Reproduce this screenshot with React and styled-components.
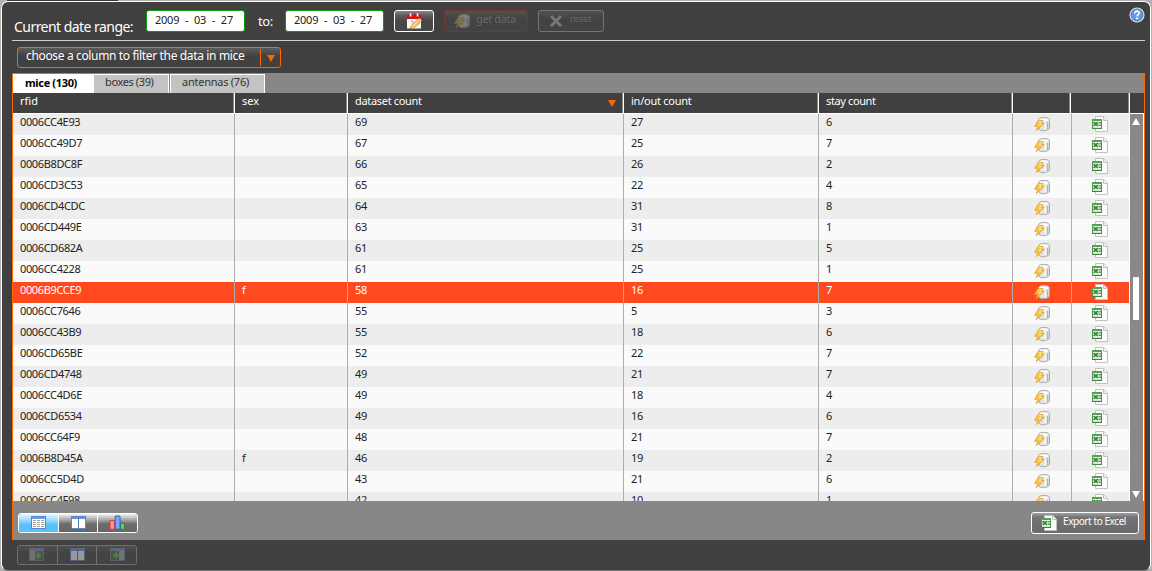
import React from "react";
import styled, { createGlobalStyle, css } from "styled-components";

const Global = createGlobalStyle`
  * { box-sizing: border-box; }
  html, body { margin: 0; height: 571px; overflow: hidden; background: #b2b2b2; }
  body { font-family: "Noto Sans", "Open Sans", sans-serif; font-size: 11px; color: #222; }
  svg { display: block; flex: none; }
`;

const Page = styled.div`
  height: 571px;
  padding: 1px 1px 0;
  background: linear-gradient(90deg, #b2b2b2 7px, #3a3a3a 7px 118px, #b2b2b2 118px) 0 0 / 100% 1px no-repeat #b2b2b2;
`;
const Frame = styled.div`
  height: 570px;
  border: 1px solid #fff;
  border-bottom-color: #777;
  border-radius: 7px;
  background: #404040;
  padding: 0 5px 0 10px;
`;
const TopBar = styled.header`
  display: flex;
  align-items: flex-start;
  height: 39px;
  border-bottom: 1px solid #cfcfcf;
`;
const RangeLabel = styled.span`
  width: 134px;
  padding: 15px 0 0 2px;
  font-size: 14px;
  line-height: 20px;
  letter-spacing: -0.54px;
  color: #fff;
  white-space: nowrap;
`;
const DateField = styled.div`
  display: flex;
  justify-content: space-between;
  width: 99px;
  height: 22px;
  margin-top: 8px;
  padding: 0 11px 0 8px;
  border: 1px solid #0a9a0a;
  border-radius: 3px;
  background: #fff;
  font-size: 11px;
  line-height: 18px;
  letter-spacing: -0.25px;
`;
const ToLabel = styled.span`
  width: 40px;
  padding: 10px 0 0 13px;
  color: #fff;
  font-size: 13px;
  line-height: 18px;
  letter-spacing: -0.4px;
`;
const Button = styled.button`
  display: flex;
  align-items: center;
  width: ${(p) => p.$w}px;
  height: 22px;
  margin: ${(p) => p.$m || "0"};
  padding: 0 0 0 ${(p) => p.$pad}px;
  gap: ${(p) => p.$gap || 0}px;
  border: 1px solid ${(p) => p.$line || "#fff"};
  border-radius: 3px;
  background: ${(p) => (p.$dim ? "linear-gradient(#505050, #434343 40%)" : p.$bg || "linear-gradient(#858585, #5a5a5a 25%, #484848 50%)")};
  color: ${(p) => (p.$dim ? "#686868" : "#fff")};
  font: inherit;
  font-size: ${(p) => p.$size || 11}px;
  letter-spacing: ${(p) => p.$ls || 0}px;
  white-space: nowrap;
`;
const ButtonText = styled.span`
  line-height: 16px;
  margin-top: -4px;
`;
const Help = styled.div`
  margin: 5px 0 0 auto;
`;
const FilterRow = styled.div`
  height: 32px;
  padding: 6px 0 0 5px;
`;
const Select = styled.div`
  display: flex;
  width: 264px;
  height: 21px;
  border: 1px solid #f60;
  border-radius: 3px;
  background: linear-gradient(#5c5c5c, #414141 45%);
  color: #fff;
  font-size: 12px;
  line-height: 16px;
  letter-spacing: -0.35px;
`;
const SelectText = styled.span`
  flex: 1;
  padding-left: 8px;
  white-space: nowrap;
`;
const SelectArrow = styled.span`
  display: flex;
  align-items: center;
  justify-content: center;
  width: 20px;
  height: 17px;
  margin-top: 1px;
  padding-top: 1px;
  border-left: 1px solid #f60;
`;
const Panel = styled.main`
  width: 1133px;
  height: 467px;
  border: 1px solid #f60;
  background: #878787;
`;
const Tabs = styled.nav`
  display: flex;
  height: 19px;
`;
const Tab = styled.div`
  width: ${(p) => p.$w}px;
  padding-left: ${(p) => p.$pad}px;
  border: 1px solid #fff;
  border-left-width: ${(p) => (p.$active ? 0 : 1)}px;
  border-bottom: 0;
  margin-right: ${(p) => (p.$active ? 0 : 1)}px;
  background: ${(p) => (p.$active ? "#fff" : "#c3c3c3")};
  color: ${(p) => (p.$active ? "#000" : "#333")};
  font-weight: ${(p) => (p.$active ? 700 : 400)};
  letter-spacing: ${(p) => p.$ls}px;
  line-height: ${(p) => (p.$active ? 16 : 14)}px;
  white-space: nowrap;
`;
const columns = "222px 113px 276px 195px 194px 59px 58px";
const HeadRow = styled.div`
  display: grid;
  grid-template-columns: 222px 113px 276px 195px 194px 58px 59px 14px;
  height: 21px;
  border-bottom: 1px solid #fff;
  background: #404040;
  color: #fff;
  line-height: 16px;
`;
const HeadCell = styled.div`
  display: flex;
  justify-content: space-between;
  padding-left: 7px;
  padding-right: 7px;
  border-right: ${(p) => (p.$last ? 0 : 1)}px solid #fff;
  box-shadow: ${(p) => (p.$last ? "none" : "inset -1px 0 #8a8a8a")};
  letter-spacing: ${(p) => p.$ls || 0}px;
`;
const SortMark = styled.span`
  padding-top: 7px;
`;
const Body = styled.div`
  display: flex;
  height: 387px;
`;
const Rows = styled.div`
  width: 1116px;
  overflow: hidden;
`;
const Row = styled.div`
  display: grid;
  grid-template-columns: ${columns};
  height: 21px;
  background: ${(p) => (p.$selected ? "#ff4a20" : p.$odd ? "#fafafa" : "#ededed")};
  color: ${(p) => (p.$selected ? "#fff" : "#222")};
  line-height: 16px;
`;
const Cell = styled.div`
  padding-left: 7px;
  border-right: ${(p) => (p.$last ? 0 : 1)}px solid #adadad;
  letter-spacing: ${(p) => p.$ls || 0}px;
  ${(p) => p.$icon && css`padding: 2px 0 0 ${p.$icon}px;`}
`;
const Scroll = styled.div`
  display: flex;
  flex-direction: column;
  align-items: center;
  width: 15px;
  padding: 4px 2px 3px 0;
  border-left: 1px solid #fff;
  border-right: 1px solid #fff;
  background: #888;
`;
const Thumb = styled.div`
  width: 6px;
  height: 43px;
  margin: 152px 0 auto;
  background: #fff;
`;
const Footer = styled.footer`
  display: flex;
  justify-content: space-between;
  padding: 11px 5px 0;
`;
const Group = styled.div`
  display: flex;
  width: 120px;
  height: 20px;
  margin-top: ${(p) => (p.$off ? 0 : 1)}px;
  border: 1px solid ${(p) => (p.$off ? "#707070" : "#fff")};
  border-radius: 3px;
  overflow: hidden;
`;
const Segment = styled.div`
  display: flex;
  justify-content: center;
  align-items: center;
  flex: 1;
  padding-bottom: 1px;
  border-left: ${(p) => (p.$first ? 0 : 1)}px solid ${(p) => (p.$off ? "#707070" : "#fff")};
  background: ${(p) =>
    p.$off
      ? "linear-gradient(#4f4f4f, #434343 45%)"
      : p.$active
      ? "linear-gradient(#e8f7ff, #90d6ff 40%, #58c0fb 60%)"
      : "linear-gradient(#f4f4f4, #a0a0a0 35%, #6c6c6c 55%, #666)"};
  svg { opacity: ${(p) => (p.$off ? 0.45 : 1)}; }
`;
const BottomTools = styled.div`
  padding: 5px 0 0 5px;
`;

const Triangle = ({ color, up, w = 8, h = 7 }) => (
  <svg width={w} height={h} viewBox="0 0 8 7">
    <path fill={color} d={up ? "M4 0 8 7H0Z" : "M0 0H8L4 7Z"} />
  </svg>
);

const DataIcon = ({ dim }) => (
  <svg width="17" height="16" viewBox="0 0 17 16" opacity={dim ? 0.32 : 1}>
    <path d="M4.5 3.5C5.5 1 12.5.8 14.5 2.4q1 .8 1 2V12c-1 2.8-8.5 3.6-10.5 1.4Z" fill="#e4e4e4" stroke="#ababab" />
    <path d="M5.5 3.8C7 2 13 2 14.5 3.8 13 5.8 9 5.8 7 5Z" fill="#fbfbfb" />
    <path d="M13.6 6v7" stroke="#b4b4b4" strokeWidth="1.4" />
    <path d="M11.4 6.6v6.6" stroke="#fafafa" strokeWidth="1.6" />
    <path d="M4 4.5h5.2L7.4 7.4h3L2.2 14.6l1.6-4.3H.6Z" fill="#f9c545" stroke="#d9a437" strokeWidth=".8" />
    <path d="M4.8 5.5h2.6L5.4 8.6h2" fill="none" stroke="#ffe78f" />
  </svg>
);

const ExcelIcon = () => (
  <svg width="16" height="16" viewBox="0 0 16 16">
    <path d="M3.5.5h8.2l3.8 3.7v11.3h-12Z" fill="#fcfcfc" stroke="#c2c2c2" />
    <path d="M11.5.8v3.7h4" fill="#f0f0f0" stroke="#c2c2c2" />
    <path d="M.5 3.5h9v9h-9Z" fill="#f2f8f1" stroke="#4f944d" />
    <path d="M0 3h10v2H0Z" fill="#55a052" />
    <path d="M1 6h8v4H1Z" fill="#b4d8af" />
    <path d="m1.8 6 4 4M5.8 6l-4 4" stroke="#2f7c30" strokeWidth="1.3" />
    <path d="M7 6.6h2.4M7 9.4h2.4" stroke="#4a9148" />
    <path d="M0 12.4h10" stroke="#3c873c" strokeWidth="1.2" />
  </svg>
);

const CalendarIcon = () => (
  <svg width="17" height="17" viewBox="0 0 17 17">
    <path d="M1 2h14v13.5H1Z" fill="#f7f7f7" />
    <path d="M1 1.5h14v4.5H1Z" fill="#dd1111" />
    <path d="M3.7 0h1.8v3.5H3.7ZM10.7 0h1.8v3.5h-1.8Z" fill="#fff" stroke="#a66" strokeWidth=".5" />
    <path d="M5 8h2v5" fill="none" stroke="#aaa" />
    <path d="m5.2 12.6 6.8-6.4 2.7 2.7-6.9 6.4-3.5.9Z" fill="#f7c653" stroke="#c18328" strokeWidth=".6" />
    <path d="m6.5 13 6.6-6" stroke="#fff0a8" />
    <path d="m12 6.2 1.3-1.2 2.6 2.7-1.2 1.2Z" fill="#eebc9a" />
    <path d="m4.2 16.3.4-1.6 1.2 1.2Z" fill="#333" />
  </svg>
);

const HelpIcon = () => (
  <svg width="16" height="16" viewBox="0 0 16 16">
    <circle cx="8" cy="8" r="7" fill="#6c9bd4" stroke="#d4e2f2" strokeWidth="1.2" />
    <circle cx="8" cy="8" r="5.7" fill="none" stroke="#4678b8" strokeWidth=".8" />
    <path d="M5.9 6.3C6 3.4 10.2 3.5 10.1 6c0 1.5-2 1.6-2 3.2" fill="none" stroke="#fff" strokeWidth="1.7" />
    <path d="M7.2 10.4h1.9v1.8H7.2Z" fill="#fff" />
  </svg>
);

const CrossIcon = () => (
  <svg width="14" height="14" viewBox="0 0 14 14">
    <path d="m2 2 10 10M12 2 2 12" stroke="#777" strokeWidth="3" />
  </svg>
);

const TableIcon = () => (
  <svg width="15" height="13" viewBox="0 0 15 13" shapeRendering="crispEdges">
    <path d="M.5.5h14v12H.5Z" fill="#fff" stroke="#5b86c4" />
    <path d="M1 1h13v2H1Z" fill="#6d9be0" />
    <path d="M2 4.5h11M2 6.5h11M2 8.5h11M2 10.5h11" stroke="#a2a2a2" strokeDasharray="3 1" />
  </svg>
);

const ColumnsIcon = () => (
  <svg width="15" height="13" viewBox="0 0 15 13" shapeRendering="crispEdges">
    <path d="M.5.5h14v12H.5Z" fill="#fff" stroke="#5f84c4" />
    <path d="M1 1h13v2H1Z" fill="#6591dc" />
    <path d="M7.5 1v11" stroke="#5379bd" />
  </svg>
);

const ChartIcon = () => (
  <svg width="17" height="15" viewBox="0 0 17 15">
    <path d="M1 5.5h4.5v8.7H1Z" fill="#ff9292" stroke="#e73638" />
    <path d="M11.5 8.5h4v5.7h-4Z" fill="#7dbd7c" stroke="#328a35" />
    <path d="M6.2 1H11v13.2H6.2Z" fill="#77a9ff" stroke="#2863cb" />
  </svg>
);

const MoveIcon = ({ left }) => (
  <svg width="16" height="13" viewBox="0 0 16 13">
    <g transform={left ? "matrix(-1 0 0 1 16 0)" : undefined}>
      <path d="M.5.5h14v12H.5Z" fill="#aaa" stroke="#7284a5" />
      <path d="M1 1h13v2H1Z" fill="#7590bd" />
      <path d="M6 3h8v9H6Z" fill="#5c655c" />
      <path d="M5.5 6.2H8V3.2L12.6 7.5 8 11.8V8.8H5.5Z" fill="#62c04a" />
    </g>
  </svg>
);

const data = [
  ["0006CC4E93", "", 69, 27, 6],
  ["0006CC49D7", "", 67, 25, 7],
  ["0006B8DC8F", "", 66, 26, 2],
  ["0006CD3C53", "", 65, 22, 4],
  ["0006CD4CDC", "", 64, 31, 8],
  ["0006CD449E", "", 63, 31, 1],
  ["0006CD682A", "", 61, 25, 5],
  ["0006CC4228", "", 61, 25, 1],
  ["0006B9CCE9", "f", 58, 16, 7],
  ["0006CC7646", "", 55, 5, 3],
  ["0006CC43B9", "", 55, 18, 6],
  ["0006CD65BE", "", 52, 22, 7],
  ["0006CD4748", "", 49, 21, 7],
  ["0006CC4D6E", "", 49, 18, 4],
  ["0006CD6534", "", 49, 16, 6],
  ["0006CC64F9", "", 48, 21, 7],
  ["0006B8D45A", "f", 46, 19, 2],
  ["0006CC5D4D", "", 43, 21, 6],
  ["0006CC4F98", "", 42, 10, 1],
];

const DateInput = () => (
  <DateField>
    <span>2009</span>
    <span>-</span>
    <span>03</span>
    <span>-</span>
    <span>27</span>
  </DateField>
);

export default function App() {
  return (
    <>
      <Global />
      <Page>
        <Frame>
          <TopBar>
            <RangeLabel>Current date range:</RangeLabel>
            <DateInput />
            <ToLabel>to:</ToLabel>
            <DateInput />
            <Button $w={40} $pad={11} $m="8px 0 0 10px"><CalendarIcon /></Button>
            <Button $w={84} $pad={9} $gap={5} $m="8px 0 0 10px" $dim $line="#74382f" $ls={-0.38}>
              <DataIcon dim />
              <ButtonText>get data</ButtonText>
            </Button>
            <Button $w={66} $pad={10} $gap={7} $m="8px 0 0 10px" $dim $line="#747474" $size={9.5} $ls={-0.2}>
              <CrossIcon />
              <ButtonText>reset</ButtonText>
            </Button>
            <Help><HelpIcon /></Help>
          </TopBar>
          <FilterRow>
            <Select>
              <SelectText>choose a column to filter the data in mice</SelectText>
              <SelectArrow><Triangle color="#f60" /></SelectArrow>
            </Select>
          </FilterRow>
          <Panel>
            <Tabs>
              <Tab $active $w={80} $pad={12} $ls={-0.35}>mice (130)</Tab>
              <Tab $w={76} $pad={11} $ls={-0.38}>boxes (39)</Tab>
              <Tab $w={95} $pad={11} $ls={-0.25}>antennas (76)</Tab>
            </Tabs>
            <HeadRow>
              <HeadCell>rfid</HeadCell>
              <HeadCell>sex</HeadCell>
              <HeadCell $ls={-0.32}>dataset count<SortMark><Triangle color="#f60" /></SortMark></HeadCell>
              <HeadCell $ls={-0.25}>in/out count</HeadCell>
              <HeadCell $ls={-0.38}>stay count</HeadCell>
              <HeadCell />
              <HeadCell />
              <HeadCell $last />
            </HeadRow>
            <Body>
              <Rows>
                {data.map(([id, sex, sets, moves, stays], i) => (
                  <Row key={id} $odd={i % 2} $selected={i === 8}>
                    <Cell $ls={-0.36}>{id}</Cell>
                    <Cell>{sex}</Cell>
                    <Cell $ls={-0.2}>{sets}</Cell>
                    <Cell $ls={-0.2}>{moves}</Cell>
                    <Cell>{stays}</Cell>
                    <Cell $icon={21}><DataIcon /></Cell>
                    <Cell $icon={20} $last><ExcelIcon /></Cell>
                  </Row>
                ))}
              </Rows>
              <Scroll>
                <Triangle color="#fff" up />
                <Thumb />
                <Triangle color="#fff" />
              </Scroll>
            </Body>
            <Footer>
              <Group>
                <Segment $first $active><TableIcon /></Segment>
                <Segment><ColumnsIcon /></Segment>
                <Segment><ChartIcon /></Segment>
              </Group>
              <Button $w={108} $pad={9} $gap={6} $size={10} $ls={-0.42} $bg="linear-gradient(#a0a0a0, #747474 22%, #6a6a6a)">
                <ExcelIcon />
                <ButtonText>Export to Excel</ButtonText>
              </Button>
            </Footer>
          </Panel>
          <BottomTools>
            <Group $off>
              <Segment $off $first><MoveIcon /></Segment>
              <Segment $off><ColumnsIcon /></Segment>
              <Segment $off><MoveIcon left /></Segment>
            </Group>
          </BottomTools>
        </Frame>
      </Page>
    </>
  );
}
